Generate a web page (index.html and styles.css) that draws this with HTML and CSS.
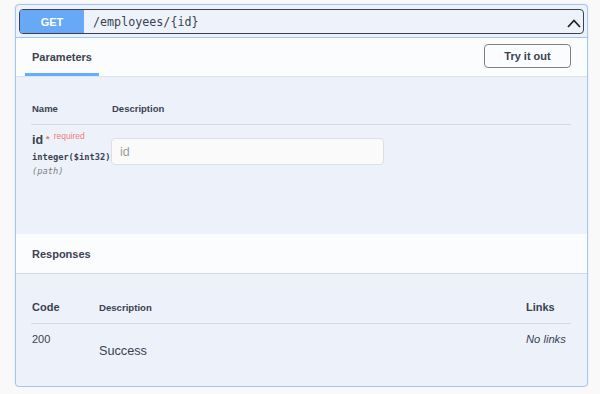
FILE: index.html
```html
<!DOCTYPE html>
<html lang="en">
<head>
  <meta charset="UTF-8" />
  <title>GET /employees/{id}</title>
  <link rel="stylesheet" href="styles.css">
</head>
<body>
  <div class="opblock">
    <div class="summary">
      <div class="summary-control">
        <span class="method">GET</span>
        <span class="path">/employees/{id}</span>
        <svg class="chevron" width="14" height="9" viewBox="0 0 14 9">
          <polyline points="1,8 7,1.5 13,8" fill="none" stroke="#1f2328" stroke-width="1.8"/>
        </svg>
      </div>
    </div>

    <div class="section-header">
      <div class="tab">Parameters</div>
      <button class="try-btn">Try it out</button>
    </div>

    <div class="params-body">
      <div class="params-grid head">
        <div>Name</div>
        <div>Description</div>
      </div>
      <div class="params-grid row">
        <div class="param-name">
          <div class="name-line">id<span class="star">*</span><span class="req">required</span></div>
          <div class="param-type">integer($int32)</div>
          <div class="param-in">(path)</div>
        </div>
        <div class="param-desc">
          <input class="param-input" type="text" placeholder="id">
        </div>
      </div>
    </div>

    <div class="section-header responses-header">
      <div class="title">Responses</div>
    </div>

    <div class="responses-body">
      <div class="resp-grid head">
        <div class="col-code">Code</div>
        <div class="col-desc">Description</div>
        <div class="col-links">Links</div>
      </div>
      <div class="resp-grid row">
        <div class="code">200</div>
        <div class="desc">Success</div>
        <div class="links">No links</div>
      </div>
    </div>
  </div>
</body>
</html>
```

FILE: styles.css
```css
body {
  margin: 0;
  padding: 4px 0 0 15px;
  background: #f9f9f9;
  font-family: "Liberation Sans", Arial, sans-serif;
  color: #3b4151;
}

.opblock {
  width: 573px;
  box-sizing: border-box;
  border: 1px solid #a3c6f4;
  border-radius: 4px;
  background: #edf2fa;
  box-shadow: 0 0 2px rgba(0, 0, 0, 0.1);
  overflow: hidden;
}

/* summary bar */
.summary {
  padding: 4px 3px 3px 3px;
  border-bottom: 1px solid #a3c6f4;
}

.summary-control {
  display: flex;
  align-items: center;
  height: 23px;
  border: 1.5px solid #3b4151;
  border-radius: 4px;
  background: #eef3fb;
  overflow: hidden;
}

.method {
  width: 64px;
  height: 100%;
  display: flex;
  align-items: center;
  justify-content: center;
  background: #67a9f7;
  color: #fff;
  font-weight: bold;
  font-size: 11px;
}

.path {
  flex: 1;
  padding-left: 9px;
  font-family: "DejaVu Sans Mono", monospace;
  font-size: 11.7px;
  color: #3b4151;
}

.chevron {
  margin-right: 2px;
  margin-top: 3px;
}

/* section header */
.section-header {
  display: flex;
  justify-content: space-between;
  align-items: center;
  height: 38px;
  padding: 0 16px 0 9px;
  background: #fbfcfe;
  box-shadow: 0 1px 1px rgba(0, 0, 0, 0.06);
}

.tab {
  height: 100%;
  box-sizing: border-box;
  display: flex;
  align-items: center;
  padding: 2px 7px 0 7px;
  border-bottom: 3px solid #61affe;
  font-size: 11px;
  font-weight: bold;
}

.try-btn {
  width: 87px;
  height: 24px;
  border: 1.5px solid #808080;
  border-radius: 4px;
  background: transparent;
  font-family: "Liberation Sans", Arial, sans-serif;
  font-size: 11px;
  font-weight: bold;
  color: #3b4151;
  margin-top: -2px;
}

/* parameters */
.params-body {
  height: 158px;
  box-sizing: border-box;
  padding: 27px 16px 0 15px;
}

.params-grid {
  display: grid;
  grid-template-columns: 80px 1fr;
}

.params-grid.head {
  font-size: 9.5px;
  font-weight: bold;
  line-height: 12px;
  padding: 0 0 9px 1px;
  border-bottom: 1px solid #d4d9e2;
}

.params-grid.row {
  padding: 8px 0 0 1px;
}

.name-line {
  font-size: 12.5px;
  font-weight: bold;
  line-height: 15px;
  height: 15px;
}

.star {
  color: #f07070;
  font-size: 9px;
  line-height: 0;
  vertical-align: 2px;
  margin-left: 3px;
}

.req {
  color: #f27a7a;
  font-size: 8.5px;
  font-weight: normal;
  line-height: 0;
  vertical-align: 5px;
  margin-left: 4px;
}

.param-type,
.param-in {
  font-family: "DejaVu Sans Mono", monospace;
  font-size: 8.7px;
  line-height: 14px;
}

.param-type {
  font-weight: bold;
  margin-top: 2px;
}

.param-in {
  font-style: italic;
  color: #808080;
}

.param-input {
  display: block;
  width: 273px;
  height: 27px;
  box-sizing: border-box;
  margin: 5px 0 0 -1px;
  padding: 0 8px;
  border: 1px solid #dcdfe4;
  border-radius: 4px;
  background: #fafafa;
  font-family: "Liberation Sans", Arial, sans-serif;
  font-size: 12.5px;
  color: #3b4151;
}

.param-input::placeholder {
  color: #9a9a9a;
}

/* responses */
.responses-header {
  padding-left: 16px;
  border-bottom: 1px solid #d4d9e2;
  box-shadow: none;
  height: 40px;
  box-sizing: border-box;
}

.title {
  font-size: 11px;
  font-weight: bold;
}

.responses-body {
  height: 112px;
  box-sizing: border-box;
  padding: 26px 16px 0 15px;
}

.resp-grid {
  display: grid;
  grid-template-columns: 67px 1fr 45px;
  align-items: baseline;
  padding-left: 1px;
}

.resp-grid.head {
  line-height: 14px;
  font-weight: bold;
  padding-bottom: 8px;
  border-bottom: 1px solid #d4d9e2;
}

.col-code,
.col-links {
  font-size: 11px;
}

.col-desc {
  font-size: 9.6px;
}

.resp-grid.row {
  padding-top: 8px;
  align-items: start;
  font-size: 11px;
  line-height: 14px;
}

.desc {
  font-size: 12.7px;
  line-height: 16px;
  margin-top: 11px;
}

.links {
  font-style: italic;
  font-size: 11.2px;
  white-space: nowrap;
}
```
